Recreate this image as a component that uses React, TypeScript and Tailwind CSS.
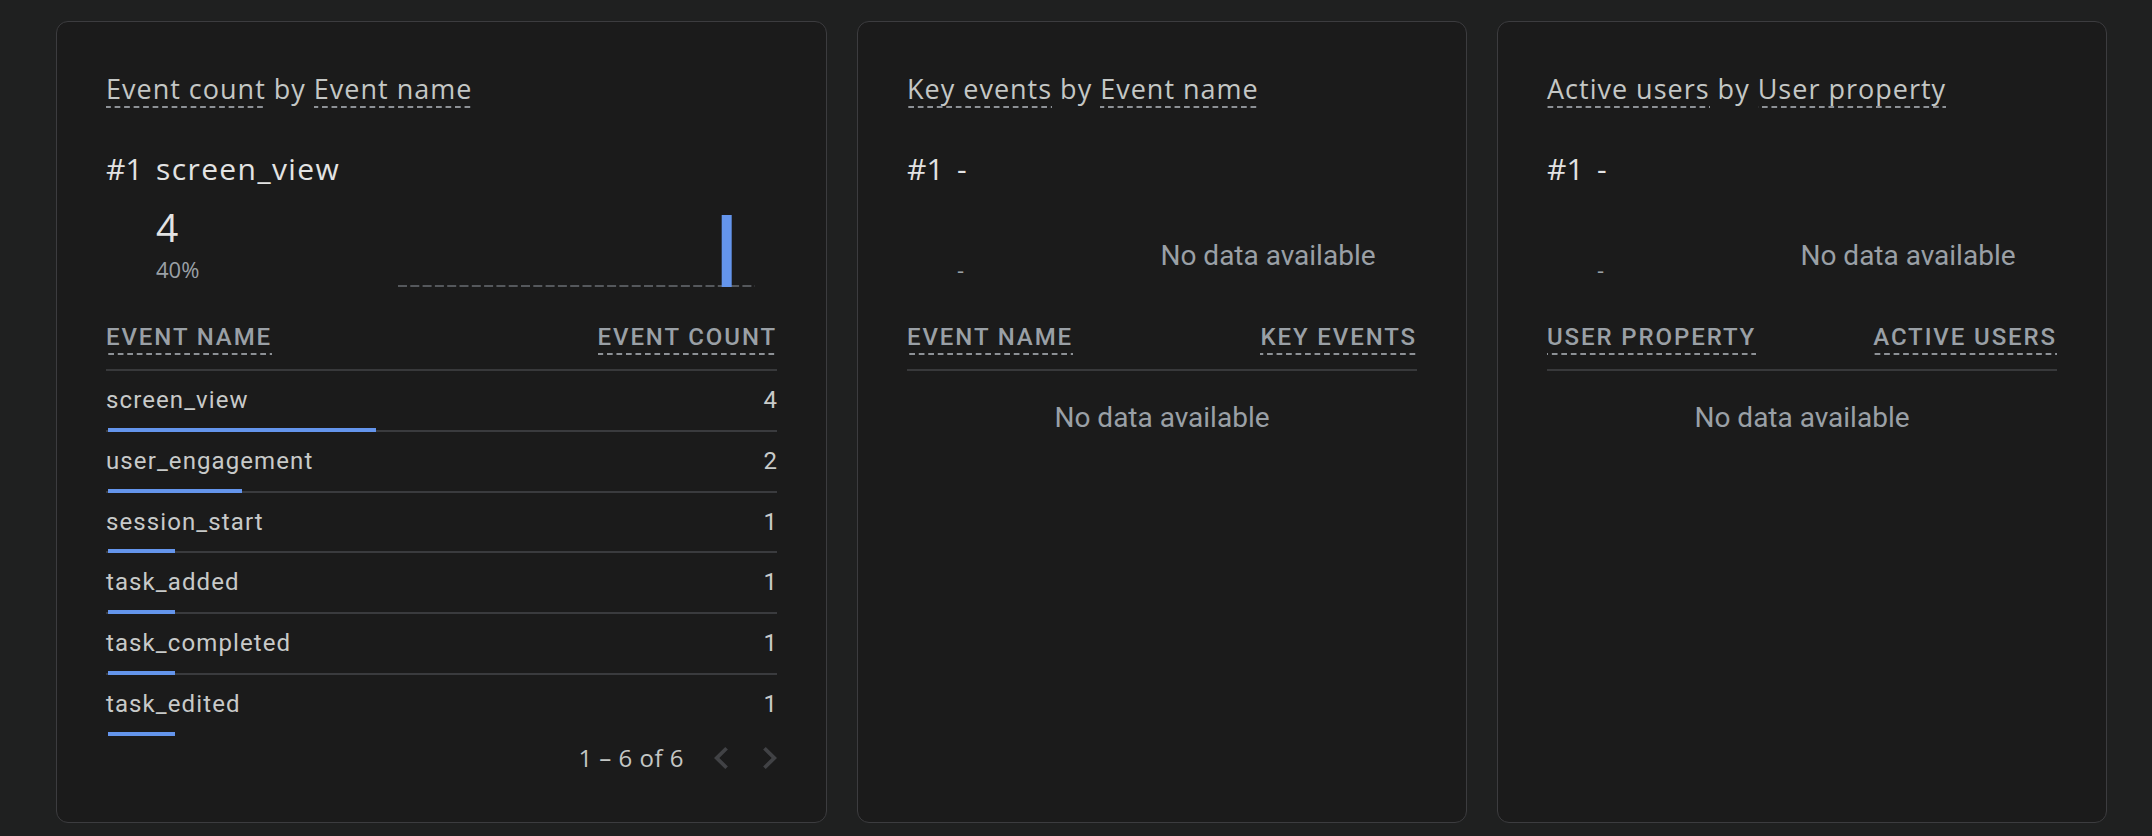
import React from "react";

const sans = "font-['Open_Sans',sans-serif]";
const roboto = "font-['Roboto',sans-serif]";
const dashed =
  "bg-[linear-gradient(to_right,#8d9196_6px,transparent_6px)] bg-[length:9.5px_2px] bg-repeat-x bg-bottom";

type Row = { name: string; count: number };

const rows: Row[] = [
  { name: "screen_view", count: 4 },
  { name: "user_engagement", count: 2 },
  { name: "session_start", count: 1 },
  { name: "task_added", count: 1 },
  { name: "task_completed", count: 1 },
  { name: "task_edited", count: 1 },
];
const total = rows.reduce((s, r) => s + r.count, 0);

const Dashed = ({ children, className = "" }: { children: React.ReactNode; className?: string }) => (
  <span className={`inline-block ${dashed} ${className}`}>{children}</span>
);

const CardTitle = ({ a, b }: { a: string; b: string }) => (
  <h2 className={`${sans} text-[27px] leading-[32px] tracking-[1px] text-[#c4c7c5]`}>
    <Dashed className="pb-[3px]">{a}</Dashed> by <Dashed className="pb-[3px]">{b}</Dashed>
  </h2>
);

const Rank = ({ name }: { name: string }) => (
  <div className={`${sans} mt-[43px] flex text-[30px] leading-[36px] text-[#e3e3e3]`}>
    <span className="w-[50px]">#1</span>
    <span className="tracking-[1.4px]">{name}</span>
  </div>
);

const TableHead = ({ left, right }: { left: string; right: string }) => (
  <div
    className={`${roboto} mt-[36px] flex justify-between border-b-2 border-[#38393b] pb-[14px] text-[24px] font-medium uppercase leading-[28px] tracking-[1.9px] text-[#9aa0a6]`}
  >
    <Dashed className="pb-[4px]">{left}</Dashed>
    <Dashed className="pb-[4px]">{right}</Dashed>
  </div>
);

const NoData = ({ className = "" }: { className?: string }) => (
  <div className={`${roboto} text-[28px] leading-[33px] text-[#9aa0a6] ${className}`}>No data available</div>
);

const Chevron = ({ dir }: { dir: "left" | "right" }) => (
  <svg width="15" height="22" viewBox="8 6 8 12" preserveAspectRatio="none" fill="#414245">
    {dir === "left" ? (
      <path d="M15.41 7.41L14 6l-6 6 6 6 1.41-1.41L10.83 12z" />
    ) : (
      <path d="M10 6L8.59 7.41 13.17 12l-4.58 4.59L10 18l6-6z" />
    )}
  </svg>
);

const EventCountCard = () => (
  <section className="flex w-[771px] flex-col rounded-[12px] border border-[#3c3c3f] bg-[#1b1b1b] px-[49px] pt-[51px]">
    <CardTitle a="Event count" b="Event name" />
    <Rank name="screen_view" />
    <div className="mt-[18px] flex items-end">
      <div className={`${sans} w-[292px] shrink-0 pb-[5px] pl-[50px]`}>
        <div className="h-[44px] text-[39px] leading-[44px] text-[#e3e3e3]">4</div>
        <div className="mt-[7px] text-[22px] leading-[26px] text-[#9aa0a6]">40%</div>
      </div>
      <svg width="357" height="72" viewBox="0 0 357 72" className="block">
        <line x1="0" y1="71" x2="357" y2="71" stroke="#55585c" strokeWidth="2" strokeDasharray="9 3.3" />
        <rect x="323.7" y="0" width="10" height="72" fill="#6495ec" />
      </svg>
    </div>
    <TableHead left="Event name" right="Event count" />
    <div className={`${roboto} text-[24px] leading-[28px] tracking-[1.1px] text-[#c8cac9]`}>
      {rows.map((r, i) => {
        const last = i === rows.length - 1;
        return (
          <div key={r.name} className="flex h-[60.75px] flex-col pt-[15px]">
            <div className="flex justify-between">
              <span>{r.name}</span>
              <span className="tracking-normal">{r.count}</span>
            </div>
            <div className="mt-auto flex h-[4px] items-end">
              <div className={`h-[2px] w-[2px] ${last ? "" : "bg-[#3a3b3e]"}`} />
              <div className="h-[4px] bg-[#6495ec]" style={{ width: `${(r.count / total) * 671}px` }} />
              <div className={`h-[2px] flex-1 ${last ? "" : "bg-[#3a3b3e]"}`} />
            </div>
          </div>
        );
      })}
    </div>
    <div className="mt-[8px] flex items-center justify-end">
      <span className={`${sans} text-[24px] leading-[28px] tracking-[0.5px] text-[#c4c7c5]`}>1 – 6 of 6</span>
      <span className="ml-[30px] flex">
        <Chevron dir="left" />
      </span>
      <span className="ml-[33px] flex">
        <Chevron dir="right" />
      </span>
    </div>
  </section>
);

const EmptyCard = ({
  a,
  b,
  left,
  right,
}: {
  a: string;
  b: string;
  left: string;
  right: string;
}) => (
  <section className="flex w-[610px] flex-col rounded-[12px] border border-[#3c3c3f] bg-[#1b1b1b] px-[49px] pt-[51px]">
    <CardTitle a={a} b={b} />
    <Rank name="-" />
    <div className="mt-[18px] flex items-end">
      <div className={`${sans} w-[234px] shrink-0 pb-[5px] pl-[50px]`}>
        <div className="h-[44px]" />
        <div className="mt-[7px] text-[22px] leading-[26px] text-[#9aa0a6]">-</div>
      </div>
      <div className="mr-[22px] flex h-[72px] flex-1 justify-center pt-[24px]">
        <NoData />
      </div>
    </div>
    <TableHead left={left} right={right} />
    <NoData className="mt-[30px] text-center" />
  </section>
);

export default function App() {
  return (
    <div className="flex h-[836px] w-full gap-[30px] bg-[#1f2020] pb-[13px] pl-[56px] pt-[21px]">
      <EventCountCard />
      <EmptyCard a="Key events" b="Event name" left="Event name" right="Key events" />
      <EmptyCard a="Active users" b="User property" left="User property" right="Active users" />
    </div>
  );
}
